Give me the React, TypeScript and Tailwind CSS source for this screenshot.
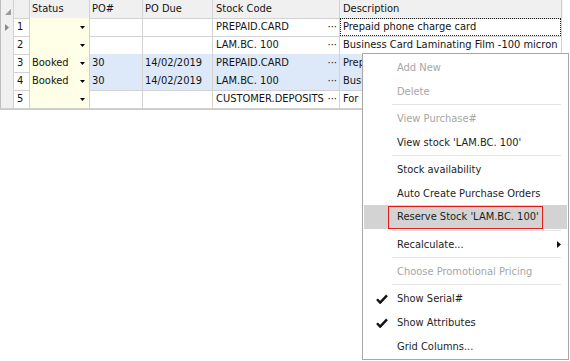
import React from "react";

const font = { fontFamily: '"DejaVu Sans Condensed", "DejaVu Sans", sans-serif' };

type Row = { n: string; status: string; po: string; due: string; code: string; desc: string; sel?: boolean };

const rows: Row[] = [
  { n: "1", status: "", po: "", due: "", code: "PREPAID.CARD", desc: "Prepaid phone charge card" },
  { n: "2", status: "", po: "", due: "", code: "LAM.BC. 100", desc: "Business Card Laminating Film -100 micron" },
  { n: "3", status: "Booked", po: "30", due: "14/02/2019", code: "PREPAID.CARD", desc: "Prepaid phone charge card", sel: true },
  { n: "4", status: "Booked", po: "30", due: "14/02/2019", code: "LAM.BC. 100", desc: "Business Card Laminating Film -100 micron", sel: true },
  { n: "5", status: "", po: "", due: "", code: "CUSTOMER.DEPOSITS", desc: "For customer deposits" },
];

const cols = "grid-cols-[14px_16px_60px_53px_70px_127px_222px]";

function Arrow() {
  return (
    <svg width="5" height="3" viewBox="0 0 5 3" className="shrink-0">
      <path d="M0 0H5L2.5 3Z" fill="#000" />
    </svg>
  );
}

function Check() {
  return (
    <svg width="12" height="10" viewBox="0 0 12 10">
      <path d="M1 5.2 L4.2 8.6 L11 1.4" fill="none" stroke="#111" strokeWidth="2.4" strokeLinejoin="miter" />
    </svg>
  );
}

type Item = { t: string; dis?: boolean; check?: boolean; sub?: boolean; hi?: boolean } | "sep";

const items: Item[] = [
  { t: "Add New", dis: true },
  { t: "Delete", dis: true },
  "sep",
  { t: "View Purchase#", dis: true },
  { t: "View stock 'LAM.BC. 100'" },
  "sep",
  { t: "Stock availability" },
  { t: "Auto Create Purchase Orders" },
  { t: "Reserve Stock 'LAM.BC. 100'", hi: true },
  "sep",
  { t: "Recalculate...", sub: true },
  "sep",
  { t: "Choose Promotional Pricing", dis: true },
  "sep",
  { t: "Show Serial#", check: true },
  { t: "Show Attributes", check: true },
  { t: "Grid Columns..." },
];

export default function App() {
  return (
    <div className="relative w-[570px] h-[361px] bg-white overflow-hidden text-[11px] text-[#141414]" style={font}>
      <div className="w-[563px] border-b border-[#c9c9c9] pb-[1px]">
        <div className={`grid ${cols} h-[18px] bg-[#f0f0f0]`}>
          <div className="border-r border-b border-[#d2d2d2] border-l border-l-[#bdbdbd] flex items-end justify-end pr-[2px] pb-[3px]">
            <svg width="6" height="6" viewBox="0 0 6 6"><path d="M6 0V6H0Z" fill="#9a9a9a" /></svg>
          </div>
          <div className="border-r border-b border-[#d2d2d2]" />
          <div className="border-r border-b border-[#d2d2d2] pl-[2px] leading-[18px]">Status</div>
          <div className="border-r border-b border-[#d2d2d2] pl-[2px] leading-[18px]">PO#</div>
          <div className="border-r border-b border-[#d2d2d2] pl-[2px] leading-[18px]">PO Due</div>
          <div className="border-r border-b border-[#d2d2d2] pl-[3px] leading-[18px]">Stock Code</div>
          <div className="border-r border-b border-[#d2d2d2] pl-[3px] leading-[18px]">Description</div>
        </div>
        {rows.map((r, i) => (
          <div key={r.n} className={`grid ${cols} h-[18px]`}>
            <div className="bg-[#f0f0f0] border-r border-b border-[#d2d2d2] border-l border-l-[#bdbdbd] flex items-center pl-[4px]">
              {i === 0 && (
                <svg width="4" height="7" viewBox="0 0 4 7"><path d="M0 0L4 3.5L0 7Z" fill="#8a8a8a" /></svg>
              )}
            </div>
            <div className="border-r border-b border-[#d2d2d2] pl-[3px] leading-[18px]">{r.n}</div>
            <div className="bg-[#fffee6] border-r border-b border-[#d2d2d2] pl-[2px] pr-[4px] flex items-center justify-between">
              <span className="leading-[18px]">{r.status}</span>
              <Arrow />
            </div>
            <div className={`${r.sel ? "bg-[#dde9f8]" : ""} border-r border-b border-[#d2d2d2] pl-[2px] leading-[18px]`}>{r.po}</div>
            <div className={`${r.sel ? "bg-[#dde9f8]" : ""} border-r border-b border-[#d2d2d2] pl-[2px] leading-[18px]`}>{r.due}</div>
            <div className={`${r.sel ? "bg-[#dde9f8]" : ""} border-r border-b border-[#d2d2d2] pl-[3px] pr-[2px] flex justify-between leading-[18px]`}>
              <span>{r.code}</span>
              <span>···</span>
            </div>
            <div className={`${r.sel ? "bg-[#dde9f8]" : ""} border-r border-b border-[#d2d2d2] leading-[18px] whitespace-nowrap overflow-hidden`}>
              {i === 0 ? (
                <div className="h-[18px] -mb-[1px] border border-dotted border-[#222] pl-[2px] leading-[16px]">{r.desc}</div>
              ) : (
                <div className="pl-[3px]">{r.desc}</div>
              )}
            </div>
          </div>
        ))}
      </div>

      <div className="absolute left-[362px] top-[53px] w-[207px] h-[307px] bg-white border border-[#a7a7a7] py-[1px] pl-[1px] pr-[1px]">
        {items.map((it, k) =>
          it === "sep" ? (
            <div key={k} className="h-[3px] flex items-center pl-[28px] pr-[6px]">
              <div className="h-px w-full bg-[#e3e3e3]" />
            </div>
          ) : (
            <div key={k} className={`relative h-[24px] flex items-center pt-[2px] ${it.hi ? "bg-[#d3d3d3]" : ""}`}>
              <div className="w-[33px] flex justify-center pl-[2px]">{it.check && <Check />}</div>
              <span className={`${it.dis ? "text-[#a6a6a6]" : "text-[#1e1e1e]"} ${it.hi ? "outline outline-1 outline-[#e21b1b] pl-[8px] pr-[3px] -ml-[8px] leading-[20px] -mt-[1px] pb-[1px]" : ""}`}>
                {it.t}
              </span>
              {it.sub && (
                <svg className="absolute right-[6px] top-[9px]" width="4" height="7" viewBox="0 0 4 7"><path d="M0 0L4 3.5L0 7Z" fill="#111" /></svg>
              )}
            </div>
          )
        )}
      </div>
    </div>
  );
}
